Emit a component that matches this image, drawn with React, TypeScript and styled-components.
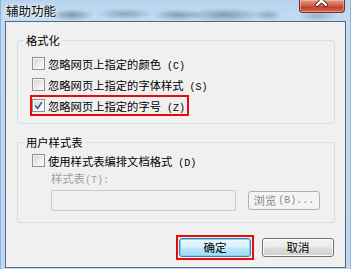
import styled, { createGlobalStyle } from 'styled-components';

const GlobalStyle = createGlobalStyle`
  html, body {
    margin: 0;
    padding: 0;
  }
  body {
    width: 351px;
    height: 269px;
    overflow: hidden;
    font-family: "Noto Sans CJK SC", "Liberation Sans", sans-serif;
    font-size: 11.3px;
    color: #000;
  }
`;

const Frame = styled.div`
  width: 351px;
  height: 269px;
  box-sizing: border-box;
  display: flex;
  flex-direction: column;
  padding: 0 5px 3px 5px;
  background:
    radial-gradient(ellipse 22px 6px at 72px 15px, rgba(70, 90, 110, 0.55), transparent),
    radial-gradient(ellipse 30px 6px at 125px 14px, rgba(80, 100, 120, 0.45), transparent),
    radial-gradient(ellipse 26px 6px at 178px 15px, rgba(70, 90, 110, 0.5), transparent),
    radial-gradient(ellipse 40px 7px at 225px 15px, rgba(70, 90, 110, 0.5), transparent),
    radial-gradient(ellipse 14px 6px at 268px 15px, rgba(90, 110, 130, 0.45), transparent),
    radial-gradient(ellipse 20px 6px at 318px 16px, rgba(90, 110, 130, 0.4), transparent),
    linear-gradient(180deg, #b6d2ee 0%, #c3dbf2 6%, #bdd7f0 100%);
  box-shadow: inset 1px 0 0 #8fb5dc, inset -1px 0 0 #8fb5dc;
`;

const TitleBar = styled.div`
  height: 21px;
  flex: none;
  display: flex;
  justify-content: space-between;
  align-items: flex-start;
`;

const Title = styled.div`
  padding-left: 1px;
  margin-top: 2px;
  line-height: 17px;
  font-size: 12.5px;
  color: #0b0b0b;
  text-shadow: 0 0 6px rgba(255, 255, 255, 0.95), 0 0 3px rgba(255, 255, 255, 0.9);
`;

const CloseButton = styled.div`
  width: 46px;
  height: 13px;
  margin-right: 1px;
  box-sizing: border-box;
  border: 1px solid #7b2e25;
  border-top: none;
  border-radius: 0 0 4px 4px;
  background: linear-gradient(180deg, #e39a87 0%, #d36a52 40%, #c1442c 60%, #d7694a 100%);
  box-shadow: inset 0 0 0 1px rgba(255, 210, 200, 0.45);
  display: flex;
  justify-content: center;
  align-items: flex-start;
`;

const Client = styled.div`
  flex: 1;
  display: flex;
  flex-direction: column;
  background: #f0f0f0;
  border: 1px solid #56687b;
  padding: 10px 10px 10px 11px;
`;

const Group = styled.fieldset<{ $gap?: number }>`
  margin: ${(p) => p.$gap ?? 0}px 0 0 0;
  padding: ${(p) => (p.$gap ? 0 : 5)}px 14px ${(p) => (p.$gap ? 11 : 7)}px 14px;
  border: 1px solid #d5dfe5;
  border-radius: 3px;
  min-width: 0;
`;

const Legend = styled.legend`
  padding: 0 2px;
  margin-left: -8px;
  line-height: 16px;
`;

const Row = styled.div`
  height: 21px;
  display: flex;
  align-items: center;
`;

const CheckLabel = styled.label<{ $marked?: boolean }>`
  display: inline-flex;
  align-items: center;
  height: 17px;
  gap: 3px;
  padding-right: 2px;
  outline: ${(p) => (p.$marked ? '2px solid #ea0a0a' : 'none')};
`;

const Box = styled.span`
  width: 13px;
  height: 13px;
  box-sizing: border-box;
  border: 1px solid #8e8f8f;
  background: linear-gradient(135deg, #d2d3d5 0%, #eeeeee 60%, #fbfbfb 100%);
  box-shadow: inset 0 0 0 1px #f6f6f6;
  display: flex;
  align-items: center;
  justify-content: center;
`;

const Key = styled.span<{ $gap?: number }>`
  font-family: "Liberation Mono", "DejaVu Sans Mono", monospace;
  font-size: 10px;
  margin-left: ${(p) => p.$gap ?? 6}px;
`;

const Caption = styled.div`
  margin-left: 19px;
  line-height: 15px;
  color: #a0a0a0;
`;

const FieldRow = styled.div`
  display: flex;
  align-items: center;
  margin: 2px 0 0 19px;
`;

const Field = styled.div`
  width: 187px;
  height: 21px;
  box-sizing: border-box;
  border: 1px solid #c9cbcd;
  border-radius: 2px;
  background: #f0f0f0;
`;

const BrowseButton = styled.div`
  width: 73px;
  height: 19px;
  margin-left: 12px;
  box-sizing: border-box;
  border: 1px solid #adb2b5;
  border-radius: 3px;
  background: #f4f4f4;
  color: #8a8a8a;
  display: flex;
  align-items: center;
  justify-content: center;
  line-height: 17px;
`;

const ButtonBar = styled.div`
  display: flex;
  justify-content: flex-end;
  gap: 11px;
  margin-top: 15px;
  padding-right: 1px;
`;

const DialogButton = styled.button<{ $primary?: boolean }>`
  position: relative;
  width: 72px;
  height: 19px;
  box-sizing: border-box;
  padding: 0;
  font: inherit;
  font-size: 11.5px;
  line-height: 17px;
  color: #000;
  border-radius: 3px;
  border: 1px solid ${(p) => (p.$primary ? '#3c7fb1' : '#707070')};
  background: ${(p) =>
    p.$primary
      ? 'linear-gradient(180deg, #eaf6fd 0%, #d9f0fc 48%, #bee6fd 52%, #a7d9f5 100%)'
      : 'linear-gradient(180deg, #f2f2f2 0%, #ebebeb 48%, #dddddd 52%, #cfcfcf 100%)'};
  box-shadow: inset 0 0 0 1px ${(p) => (p.$primary ? '#7cd4f6' : '#fcfcfc')};

  &::after {
    content: '';
    display: ${(p) => (p.$primary ? 'block' : 'none')};
    position: absolute;
    inset: -4px;
    border: 2px solid #ea0a0a;
  }
`;

function Check({ checked }: { checked?: boolean }) {
  return (
    <Box>
      {checked && (
        <svg width="9" height="9" viewBox="0 0 9 9">
          <path d="M1.3 4.6 L3.6 7.4 L7.8 1.2" fill="none" stroke="#3b4f8c" strokeWidth="1.5" />
        </svg>
      )}
    </Box>
  );
}

const options = [
  { id: 'color', text: '忽略网页上指定的颜色', key: '(C)' },
  { id: 'font', text: '忽略网页上指定的字体样式', key: '(S)' },
  { id: 'size', text: '忽略网页上指定的字号', key: '(Z)', checked: true },
];

export default function App() {
  return (
    <Frame>
      <GlobalStyle />
      <TitleBar>
        <Title>辅助功能</Title>
        <CloseButton>
          <svg width="14" height="8" viewBox="0 0 14 8">
            <path d="M2 -4 L11 5 M11 -4 L2 5" stroke="#5a1a12" strokeWidth="4" strokeLinecap="round" />
            <path d="M2 -4 L11 5 M11 -4 L2 5" stroke="#ffffff" strokeWidth="2.4" strokeLinecap="round" />
          </svg>
        </CloseButton>
      </TitleBar>
      <Client>
        <Group>
          <Legend>格式化</Legend>
          {options.map((o) => (
            <Row key={o.id}>
              <CheckLabel $marked={o.checked}>
                <Check checked={o.checked} />
                <span>
                  {o.text}
                  <Key>{o.key}</Key>
                </span>
              </CheckLabel>
            </Row>
          ))}
        </Group>
        <Group $gap={10}>
          <Legend>用户样式表</Legend>
          <Row>
            <CheckLabel>
              <Check />
              <span>
                使用样式表编排文档格式
                <Key>(D)</Key>
              </span>
            </CheckLabel>
          </Row>
          <Caption>
            样式表<Key $gap={0}>(T):</Key>
          </Caption>
          <FieldRow>
            <Field />
            <BrowseButton>
              浏览<Key $gap={2}>(B)...</Key>
            </BrowseButton>
          </FieldRow>
        </Group>
        <ButtonBar>
          <DialogButton $primary>确定</DialogButton>
          <DialogButton>取消</DialogButton>
        </ButtonBar>
      </Client>
    </Frame>
  );
}
